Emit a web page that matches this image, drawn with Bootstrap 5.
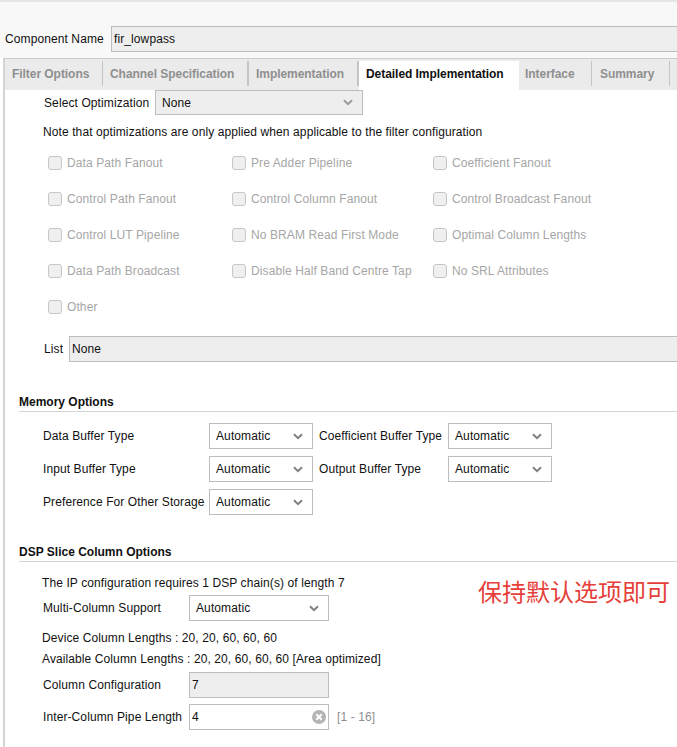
<!DOCTYPE html>
<html lang="en">
<head>
<meta charset="utf-8">
<title>fir_lowpass</title>
<link rel="stylesheet" href="https://cdn.jsdelivr.net/npm/bootstrap@5.3.0/dist/css/bootstrap.min.css">
<style>
html,body{height:747px;overflow:hidden}
body{font-family:"Liberation Sans",Arial,sans-serif;font-size:12px;letter-spacing:.1px;color:#111;background:#fff;line-height:14px;position:relative}
.topzone{background:#f8f8f8;border-top:2px solid #e6e6e6;height:58px;padding-top:24px}
.namerow{height:26px;padding-left:5px}
.namelabel{width:106px;flex:none}
.fieldbox{background:#eee;border:1px solid #bdbdbd;height:26px;padding-left:2px;display:flex;align-items:center}
.namerow .fieldbox{border-right:0}
.panelwrap{border-left:2px solid #d4d4d4;margin-left:3px;border-top:1px solid #ccc;height:689px;background:#fff;overflow:hidden}
.tabstrip{height:31px;background:#ebebeb;padding-top:2px}
.tabitem{height:25px;font-weight:700;letter-spacing:-.05px;color:#8f8f8f;display:flex;align-items:center;white-space:nowrap}
.tabitem.sep{border-right:1px solid #c4c4c4}
.tabitem.sepx{border-right:2px solid #c4c4c4}
.tabitem.on{background:#fff;color:#111;height:29px;padding-bottom:4px}
.body-pane{position:relative}
.optrow{height:25px}
.optrow .selbox{height:25px}
.pad-a{padding-left:39px}
.notetext{margin-top:10px;padding-left:38px;height:14px}
.selbox{border:1px solid #bdbdbd;background:#fff;height:26px;display:flex;align-items:center;justify-content:space-between;padding:0 9px 0 6px;flex:none}
.selbox.gray{background:#eee}
.chev{width:10px;height:7px;flex:none}
.checkgrid{padding-left:43px;margin-top:17px}
.checkrow{display:flex;height:36px;color:#a6a6a6}
.checkcell{display:flex;align-items:flex-start;gap:5px;white-space:nowrap}
.c1{width:184px}.c2{width:201px}
.boxmark{width:14px;height:14px;border:1px solid #c6c6c6;border-radius:3px;background:#efefef;flex:none}
.listrow{height:26px;padding-left:39px}
.listlabel{width:25px;flex:none}
.listrow .fieldbox{border-right:0}
.grouphead{margin-left:14px;font-weight:700;letter-spacing:0;height:17px;border-bottom:1px solid #d4d4d4;display:flex;align-items:flex-start}
.memhead{margin-top:33px}
.dsphead{margin-top:30px}
.memrows{padding-left:38px;margin-top:11px}
.memrow{height:26px;margin-bottom:7px}
.ml1{width:166px;white-space:nowrap;flex:none}
.sel104{width:104px}
.ml2{width:135px;padding-left:6px;white-space:nowrap;flex:none}
.dsp{padding-left:37px}
.dl{width:147px;padding-left:1px;white-space:nowrap;flex:none}
.sel140{width:140px}
.inputline{height:26px}
.plainrow{height:14px;white-space:nowrap}
.rangehint{color:#8f8f8f;margin-left:8px}
.redtag{position:absolute;left:473px;top:485px;color:#e5403a;font-family:"Noto Sans CJK SC",sans-serif;font-size:24px;letter-spacing:0;line-height:32px;white-space:nowrap}
.clearicon{width:14px;height:14px;flex:none}
</style>
</head>
<body>
<div class="topzone">
  <div class="namerow d-flex align-items-center"><span class="namelabel">Component Name</span><div class="fieldbox flex-grow-1">fir_lowpass</div></div>
</div>
<div class="panelwrap">
  <div class="tabstrip d-flex">
    <div class="tabitem sep" style="width:98px;padding-left:7px">Filter Options</div>
    <div class="tabitem sepx" style="width:146px;padding-left:7px">Channel Specification</div>
    <div class="tabitem sepx" style="width:110px;padding-left:7px">Implementation</div>
    <div class="tabitem on" style="width:160px;padding-left:7px">Detailed Implementation</div>
    <div class="tabitem sep" style="width:73px;padding-left:6px">Interface</div>
    <div class="tabitem sep" style="width:78px;padding-left:8px">Summary</div>
  </div>
  <div class="body-pane">
    <div class="optrow d-flex align-items-center pad-a"><span style="width:111px">Select Optimization</span><div class="selbox gray" style="width:208px"><span>None</span><svg class="chev" viewBox="0 0 10 7"><path d="M1 1.2 5 5.2l4-4" fill="none" stroke="#9a9a9a" stroke-width="2"/></svg></div></div>
    <div class="notetext">Note that optimizations are only applied when applicable to the filter configuration</div>
    <div class="checkgrid">
      <div class="checkrow">
        <div class="checkcell c1"><span class="boxmark"></span><span>Data Path Fanout</span></div>
        <div class="checkcell c2"><span class="boxmark"></span><span>Pre Adder Pipeline</span></div>
        <div class="checkcell"><span class="boxmark"></span><span>Coefficient Fanout</span></div>
      </div>
      <div class="checkrow">
        <div class="checkcell c1"><span class="boxmark"></span><span>Control Path Fanout</span></div>
        <div class="checkcell c2"><span class="boxmark"></span><span>Control Column Fanout</span></div>
        <div class="checkcell"><span class="boxmark"></span><span>Control Broadcast Fanout</span></div>
      </div>
      <div class="checkrow">
        <div class="checkcell c1"><span class="boxmark"></span><span>Control LUT Pipeline</span></div>
        <div class="checkcell c2"><span class="boxmark"></span><span>No BRAM Read First Mode</span></div>
        <div class="checkcell"><span class="boxmark"></span><span>Optimal Column Lengths</span></div>
      </div>
      <div class="checkrow">
        <div class="checkcell c1"><span class="boxmark"></span><span>Data Path Broadcast</span></div>
        <div class="checkcell c2"><span class="boxmark"></span><span>Disable Half Band Centre Tap</span></div>
        <div class="checkcell"><span class="boxmark"></span><span>No SRL Attributes</span></div>
      </div>
      <div class="checkrow">
        <div class="checkcell c1"><span class="boxmark"></span><span>Other</span></div>
      </div>
    </div>
    <div class="listrow d-flex align-items-center"><span class="listlabel">List</span><div class="fieldbox flex-grow-1">None</div></div>
    <div class="grouphead memhead">Memory Options</div>
    <div class="memrows">
      <div class="memrow d-flex align-items-center"><span class="ml1">Data Buffer Type</span><div class="selbox sel104"><span>Automatic</span><svg class="chev" viewBox="0 0 10 7"><path d="M1 1.2 5 5.2l4-4" fill="none" stroke="#808080" stroke-width="2"/></svg></div><span class="ml2">Coefficient Buffer Type</span><div class="selbox sel104"><span>Automatic</span><svg class="chev" viewBox="0 0 10 7"><path d="M1 1.2 5 5.2l4-4" fill="none" stroke="#808080" stroke-width="2"/></svg></div></div>
      <div class="memrow d-flex align-items-center"><span class="ml1">Input Buffer Type</span><div class="selbox sel104"><span>Automatic</span><svg class="chev" viewBox="0 0 10 7"><path d="M1 1.2 5 5.2l4-4" fill="none" stroke="#808080" stroke-width="2"/></svg></div><span class="ml2">Output Buffer Type</span><div class="selbox sel104"><span>Automatic</span><svg class="chev" viewBox="0 0 10 7"><path d="M1 1.2 5 5.2l4-4" fill="none" stroke="#808080" stroke-width="2"/></svg></div></div>
      <div class="memrow d-flex align-items-center"><span class="ml1">Preference For Other Storage</span><div class="selbox sel104"><span>Automatic</span><svg class="chev" viewBox="0 0 10 7"><path d="M1 1.2 5 5.2l4-4" fill="none" stroke="#808080" stroke-width="2"/></svg></div></div>
    </div>
    <div class="grouphead dsphead">DSP Slice Column Options</div>
    <div class="dsp">
      <div class="plainrow" style="margin-top:14px">The IP configuration requires 1 DSP chain(s) of length 7</div>
      <div class="inputline d-flex align-items-center" style="margin-top:5px"><span class="dl">Multi-Column Support</span><div class="selbox sel140"><span>Automatic</span><svg class="chev" viewBox="0 0 10 7"><path d="M1 1.2 5 5.2l4-4" fill="none" stroke="#808080" stroke-width="2"/></svg></div></div>
      <div class="plainrow" style="margin-top:10px">Device Column Lengths : 20, 20, 60, 60, 60</div>
      <div class="plainrow" style="margin-top:7px">Available Column Lengths : 20, 20, 60, 60, 60 [Area optimized]</div>
      <div class="inputline d-flex align-items-center" style="margin-top:6px"><span class="dl">Column Configuration</span><div class="selbox gray sel140" style="padding-left:2px"><span>7</span></div></div>
      <div class="inputline d-flex align-items-center" style="margin-top:6px"><span class="dl">Inter-Column Pipe Length</span><div class="selbox sel140" style="padding:0 2px 0 2px"><span>4</span><svg class="clearicon" viewBox="0 0 14 14"><circle cx="7" cy="7" r="7" fill="#b4b4b4"/><path d="M4.3 4.3l5.4 5.4M9.7 4.3l-5.4 5.4" stroke="#fff" stroke-width="2"/></svg></div><span class="rangehint">[1 - 16]</span></div>
    </div>
    <div class="redtag">保持默认选项即可</div>
  </div>
</div>
</body>
</html>
